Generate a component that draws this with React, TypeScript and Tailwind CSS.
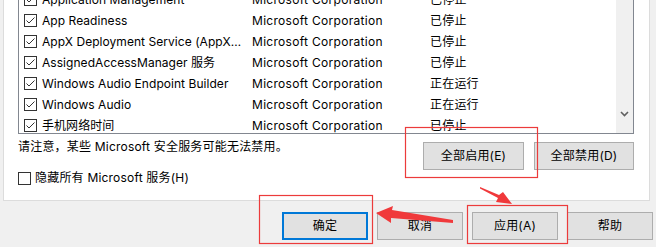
import React from 'react';

const services = [
  { name: 'Application Management', maker: 'Microsoft Corporation', state: '已停止' },
  { name: 'App Readiness', maker: 'Microsoft Corporation', state: '已停止' },
  { name: 'AppX Deployment Service (AppX…', maker: 'Microsoft Corporation', state: '已停止' },
  { name: 'AssignedAccessManager 服务', maker: 'Microsoft Corporation', state: '已停止' },
  { name: 'Windows Audio Endpoint Builder', maker: 'Microsoft Corporation', state: '正在运行' },
  { name: 'Windows Audio', maker: 'Microsoft Corporation', state: '正在运行' },
  { name: '手机网络时间', maker: 'Microsoft Corporation', state: '已停止' },
];

const CheckBox: React.FC<{ checked?: boolean }> = ({ checked }) => (
  <span className="flex h-[13px] w-[13px] shrink-0 items-center justify-center border border-[#333333] bg-white">
    {checked && (
      <svg width="11" height="11" viewBox="0 0 11 11">
        <path d="M1.5 5.5 L4 8 L9.5 2.5" fill="none" stroke="#333333" strokeWidth="1" />
      </svg>
    )}
  </span>
);

const Button: React.FC<{ label: string; w: string; primary?: boolean }> = ({ label, w, primary }) => (
  <button
    className={`flex h-[28px] items-center justify-center bg-[#e1e1e1] text-[12px] text-black ${w} ${
      primary ? 'border-2 border-[#0078d7]' : 'border border-[#adadad]'
    }`}
  >
    {label}
  </button>
);

export default function App() {
  return (
    <div className="relative h-[247px] w-[656px] overflow-hidden bg-[#f0f0f0] font-['Inter','Noto_Sans_CJK_SC',sans-serif] text-[12px] tracking-[0.2px] text-black">
      {/* 白色面板 */}
      <div className="ml-[3px] mt-[-30px] flex h-[231px] w-[647px] flex-col border border-[#dcdcdc] bg-white">
        {/* 服务列表 */}
        <div className="ml-[14px] mt-[15px] flex h-[148px] w-[616px] overflow-hidden border border-[#828790]">
          <div className="flex-1 pt-[2px]">
            {services.map((s) => (
              <div key={s.name} className="flex h-[21px] items-center whitespace-nowrap">
                <div className="flex w-[233px] items-center gap-[5px] overflow-hidden pl-[5px] tracking-[0.05px]">
                  <CheckBox checked />
                  <span>{s.name}</span>
                </div>
                <div className="w-[178px] tracking-[0.3px]">{s.maker}</div>
                <div>{s.state}</div>
              </div>
            ))}
          </div>
          <div className="flex w-[17px] flex-col items-center justify-end bg-[#f0f0f0] pb-[16px]">
            <svg width="9" height="6" viewBox="0 0 9 6">
              <path d="M1 1 L4.5 4.5 L8 1" fill="none" stroke="#606060" strokeWidth="1.6" />
            </svg>
          </div>
        </div>

        {/* 提示与按钮 */}
        <div className="flex justify-between">
          <div className="ml-[14px] flex flex-col">
            <div className="mt-[5px] leading-[16px]">请注意，某些 Microsoft 安全服务可能无法禁用。</div>
            <div className="mt-[15px] flex h-[16px] items-center gap-[4px]">
              <CheckBox />
              <span>隐藏所有 Microsoft 服务(H)</span>
            </div>
          </div>
          <div className="mr-[15px] mt-[8px] flex gap-[10px]">
            <Button label="全部启用(E)" w="w-[101px]" />
            <Button label="全部禁用(D)" w="w-[100px]" />
          </div>
        </div>
      </div>

      {/* 底部按钮 */}
      <div className="ml-[282px] mt-[11px] flex gap-[9px]">
        <Button label="确定" w="w-[86px]" primary />
        <Button label="取消" w="w-[86px]" />
        <Button label="应用(A)" w="w-[86px]" />
        <Button label="帮助" w="w-[86px]" />
      </div>

      {/* 红色标注：框和箭头 */}
      <svg className="pointer-events-none absolute left-0 top-0" width="656" height="247">
        <g fill="none" stroke="#ec3b3b" strokeWidth="1.2">
          <rect x="405.5" y="127.5" width="132" height="50" />
          <rect x="259.5" y="195.5" width="113" height="48" />
          <rect x="467.5" y="205.5" width="100" height="38" />
        </g>
        <polygon
          points="376,213 393,206 392,210 453,220 453,223 391,218 391,223"
          fill="#f0393b"
        />
        <polygon points="480,187 499,195 503,192 512,204 496,202 498,198 480,188.5" fill="#f0393b" />
      </svg>
    </div>
  );
}
